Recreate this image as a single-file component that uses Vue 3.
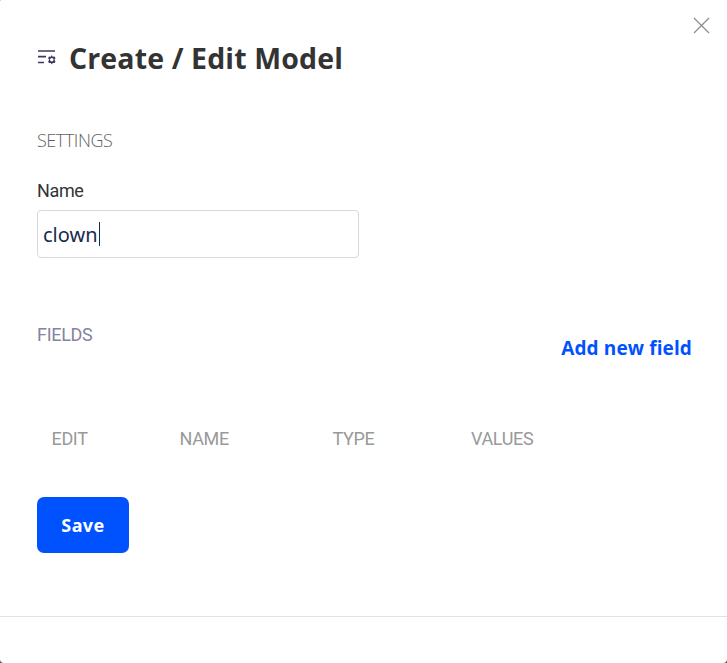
<script setup>
import { ref } from 'vue'

const name = ref('clown')
const columns = ['EDIT', 'NAME', 'TYPE', 'VALUES']
</script>

<template>
  <div class="backdrop">
    <main class="modal">
      <button class="close" aria-label="Close">
        <svg width="17" height="17" viewBox="0 0 17 17">
          <path d="M1 1 16 16M16 1 1 16" fill="none" stroke="#8b8d91" stroke-width="1.3" />
        </svg>
      </button>
      <section class="body">
        <header class="heading">
          <svg class="icon" width="20" height="18" viewBox="0 0 20 18" fill="none" stroke="#3b3960">
            <path d="M1 2H18M1 7.7H9M1 13.5H7" stroke-width="1.7" />
            <path d="m14.8 6 .9 1.7 1.9-.1.9 1.6-1.1 1.6 1.1 1.6-.9 1.6-1.9-.1-.9 1.7-.9-1.7-1.9.1-.9-1.6 1.1-1.6-1.1-1.6.9-1.6 1.9.1Z" fill="#3b3960" stroke="none" />
            <circle cx="14.8" cy="10.8" r="1.8" fill="#fff" stroke="none" />
          </svg>
          <h1>Create / Edit Model</h1>
        </header>
        <h2 class="settings">SETTINGS</h2>
        <label class="label">Name</label>
        <div class="input"><span class="value">{{ name }}</span><i class="caret"></i></div>
        <div class="fields">
          <h2 class="fields-title">FIELDS</h2>
          <a class="add">Add new field</a>
        </div>
        <div class="table">
          <span v-for="c in columns" :key="c">{{ c }}</span>
        </div>
        <button class="save">Save</button>
      </section>
      <footer class="footer"></footer>
    </main>
  </div>
</template>

<style>
body { background: #555; overflow: hidden; }
</style>

<style scoped>
* { box-sizing: border-box; }
h1, h2 { margin: 0; font-weight: 400; }
button { border: 0; padding: 0; background: none; }
.backdrop { height: 663px; }
.modal {
  position: relative;
  height: 663px;
  display: flex;
  flex-direction: column;
  background: #fff;
  border-radius: 1px 0 4px 4px;
  font-family: Roboto, "Liberation Sans", sans-serif;
}
.close { position: absolute; top: 17px; right: 17px; width: 17px; height: 17px; }
.close svg { display: block; }
.body { height: 616px; padding: 38px 36px 0 37px; }
.heading { display: flex; height: 40px; }
.icon { margin: 11px 12px 0 0; }
h1 {
  font: 700 28.5px/40px "Open Sans", "Noto Sans", sans-serif;
  letter-spacing: 0.13px;
  color: #333;
  white-space: nowrap;
}
.settings {
  margin-top: 50px;
  font: 300 18px/25px "Open Sans", sans-serif;
  letter-spacing: -0.45px;
  color: #626266;
}
.label {
  display: block;
  margin-top: 25px;
  font-size: 18px;
  line-height: 25px;
  letter-spacing: -0.35px;
  color: #333;
}
.input {
  display: flex;
  align-items: center;
  width: 322px;
  height: 48px;
  margin-top: 7px;
  padding: 2px 0 0 5px;
  border: 1px solid #d9d9d9;
  border-radius: 4px;
  font: 400 20px/28px "Noto Sans", sans-serif;
  color: #172b4d;
}
.caret { width: 1px; height: 24px; margin: -2px 0 0 1px; background: #172b4d; }
.fields {
  display: flex;
  justify-content: space-between;
  height: 42px;
  margin-top: 64px;
}
.fields-title { font-size: 18px; line-height: 26px; letter-spacing: -0.3px; color: #84849f; }
.add {
  margin-right: -1px;
  padding-top: 12px;
  font: 700 19px/28px "Open Sans", sans-serif;
  letter-spacing: 0.12px;
  color: #0052ff;
}
.table {
  display: grid;
  grid-template-columns: 128px 153px 138.5px 1fr;
  margin-top: 62px;
  padding-left: 14.5px;
  font-size: 18px;
  line-height: 25px;
  letter-spacing: -0.35px;
  color: #999;
}
.save {
  display: block;
  width: 92px;
  height: 56px;
  margin-top: 46px;
  border-radius: 7px;
  background: #0052ff;
  color: #fff;
  font: 700 18px/56px "Noto Sans", sans-serif;
  letter-spacing: 0.4px;
}
.footer { flex: 1; border-top: 1px solid #e2e2e2; }
</style>
